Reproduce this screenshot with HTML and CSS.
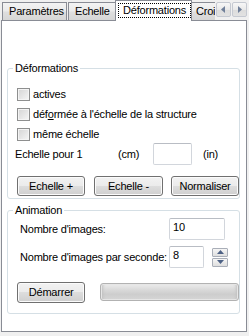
FILE: index.html
```html
<!DOCTYPE html>
<html lang="fr">
<head>
<meta charset="UTF-8" />
<title>Déformations</title>
<link rel="stylesheet" href="styles.css">
</head>
<body>

<div class="tabs">
  <div class="tab tab-param">Paramètres</div>
  <div class="tab tab-echelle">Echelle</div>
  <div class="tab tab-active"><span class="focus">Déformations</span></div>
  <div class="tab tab-clip">Croi</div>
  <div class="tab-scroll">
    <span class="arrow">
      <svg width="5" height="7" viewBox="0 0 5 7"><path d="M4 0 L0 3.5 L4 7 Z" fill="#6f7f99"/></svg>
    </span>
    <span class="arrow">
      <svg width="5" height="7" viewBox="0 0 5 7"><path d="M1 0 L5 3.5 L1 7 Z" fill="#6f7f99"/></svg>
    </span>
  </div>
</div>

<div class="panel">
  <fieldset class="group group-deform">
    <legend>Déformations</legend>
    <label class="check"><span class="box"></span>actives</label>
    <label class="check"><span class="box"></span>déf<u>o</u>rmée à l'échelle de la structure</label>
    <label class="check"><span class="box"></span>même échelle</label>

    <div class="scale-row">
      <span class="scale-label">Echelle pour 1</span>
      <span class="unit-cm">(cm)</span>
      <span class="input input-scale"></span>
      <span class="unit-in">(in)</span>
    </div>

    <div class="btn-row">
      <button class="btn btn-plus">Echelle +</button>
      <button class="btn btn-minus">Echelle -</button>
      <button class="btn btn-norm">Normaliser</button>
    </div>
  </fieldset>

  <fieldset class="group group-anim">
    <legend>Animation</legend>
    <div class="field-row first">
      <span class="field-label">Nombre d'images:</span>
      <span class="input input-count">10</span>
    </div>
    <div class="field-row">
      <span class="field-label">Nombre d'images par seconde:</span>
      <span class="input input-fps">8</span>
      <span class="spin">
        <span class="spin-btn">
          <svg width="7" height="4" viewBox="0 0 7 4"><path d="M0 4 L3.5 0 L7 4 Z" fill="#4d6185"/></svg>
        </span>
        <span class="spin-btn">
          <svg width="7" height="4" viewBox="0 0 7 4"><path d="M0 0 L3.5 4 L7 0 Z" fill="#4d6185"/></svg>
        </span>
      </span>
    </div>
    <div class="run-row">
      <button class="btn btn-start">Démarrer</button>
      <div class="progress"></div>
    </div>
  </fieldset>
</div>

</body>
</html>
```

FILE: styles.css
```css
* {
  box-sizing: border-box;
}
body {
  margin: 0;
  width: 249px;
  height: 336px;
  background: #f0f0f0;
  font-family: "Liberation Sans", Arial, sans-serif;
  font-size: 11px;
  line-height: 13px;
  letter-spacing: -0.2px;
  color: #000;
  overflow: hidden;
  white-space: nowrap;
}

/* Onglets */
.tabs {
  display: flex;
  align-items: flex-end;
  height: 20px;
  padding-left: 2px;
  position: relative;
  z-index: 2;
}
.tab {
  height: 18px;
  border: 1px solid #898c95;
  border-bottom: none;
  background: linear-gradient(#f3f3f3, #ebebeb 45%, #dedede 55%, #d6d6d6);
  padding: 2px 0 0 6px;
  overflow: hidden;
}
.tab-param {
  width: 65px;
  margin-right: 1px;
}
.tab-echelle {
  width: 47px;
  border-right: none;
}
.tab-active {
  width: 77px;
  height: 21px;
  margin-bottom: -1px;
  background: #fff;
  padding: 2px 0 0 2px;
}
.focus {
  display: inline-block;
  width: 73px;
  height: 15px;
  border: 1px dotted #000;
  padding: 0 0 0 4px;
  line-height: 13px;
}
.tab-clip {
  width: 23px;
  border-right: none;
  border-left: none;
  padding-left: 4px;
}
.tab-scroll {
  align-self: flex-start;
  display: flex;
  gap: 1px;
  margin-top: 2px;
  padding: 0 1px;
  background: #f0f0f0;
}
.arrow {
  width: 15px;
  height: 15px;
  border: 1px solid #c5c9d1;
  border-radius: 2px;
  background: linear-gradient(#f7f7f7, #e9e9e9 50%, #dcdcdc 51%, #e2e2e2);
  display: flex;
  align-items: center;
  justify-content: center;
}

/* Panneau */
.panel {
  margin-left: 1px;
  width: 246px;
  height: 312px;
  border: 1px solid #898c95;
  background: #fff;
  padding: 41px 6px 0 5px;
}
.group {
  margin: 0;
  padding: 0 0 0 7px;
  border: 1px solid #d5dfe5;
  border-radius: 3px;
  min-width: 0;
}
.group legend {
  padding: 0 2px;
  margin-left: -2px;
  line-height: 13px;
}
.group-deform {
  padding-bottom: 2px;
}
.group-anim {
  margin-top: 5px;
  padding-bottom: 10px;
}

.check {
  display: flex;
  align-items: center;
  height: 13px;
  margin-top: 7px;
  margin-left: 2px;
}
.check:first-of-type {
  margin-top: 13px;
}
.box {
  width: 13px;
  height: 13px;
  margin-right: 3px;
  border: 1px solid #8e8f8f;
  background: linear-gradient(135deg, #d4d4d4, #f6f6f6);
  box-shadow: inset 0 0 0 1px #f4f4f4;
}

.scale-row {
  display: flex;
  align-items: center;
  height: 22px;
  margin-top: 2px;
}
.scale-label {
  width: 103px;
}
.unit-cm {
  width: 35px;
}
.unit-in {
  margin-left: 11px;
}
.input {
  height: 22px;
  border: 1px solid #d2d6dc;
  border-top-color: #b9bdc4;
  border-radius: 2px;
  background: #fff;
  padding: 2px 0 0 3px;
  align-self: flex-start;
}
.input-scale {
  width: 39px;
}

.btn-row {
  display: flex;
  margin-top: 11px;
  margin-left: 2px;
}
.btn {
  height: 20px;
  border: 1px solid #707070;
  border-radius: 3px;
  background: linear-gradient(#f2f2f2, #ebebeb 50%, #dddddd 50%, #cfcfcf);
  box-shadow: inset 0 0 0 1px #fbfbfb;
  font: inherit;
  letter-spacing: inherit;
  color: #000;
  padding: 0;
}
.btn-plus {
  width: 69px;
  margin-right: 9px;
}
.btn-minus {
  width: 70px;
  margin-right: 8px;
}
.btn-norm {
  width: 69px;
}

.field-row {
  display: flex;
  align-items: center;
  height: 22px;
  margin-top: 6px;
  padding-left: 5px;
}
.field-row.first {
  margin-top: 1px;
}
.field-label {
  width: 149px;
}
.input-count {
  width: 56px;
}
.input-fps {
  width: 35px;
}
.spin {
  display: flex;
  flex-direction: column;
  gap: 1px;
  margin-left: 8px;
}
.spin-btn {
  width: 16px;
  height: 9px;
  border: 1px solid #a9aeb8;
  border-radius: 1px;
  background: linear-gradient(#f6f6f6, #dedede);
  display: flex;
  align-items: center;
  justify-content: center;
}

.run-row {
  display: flex;
  align-items: flex-start;
  margin-top: 14px;
  margin-left: 2px;
}
.btn-start {
  width: 69px;
  height: 21px;
}
.progress {
  width: 140px;
  height: 18px;
  margin: 1px 0 0 15px;
  border: 1px solid #b2b2b2;
  border-radius: 3px;
  background: linear-gradient(#ececec, #dadada 35%, #cdcdcd 65%, #d6d6d6);
  box-shadow: inset 0 0 0 1px #e6e6e6, inset 4px 0 3px -2px #c0c0c0, inset -4px 0 3px -2px #c0c0c0;
}
```
